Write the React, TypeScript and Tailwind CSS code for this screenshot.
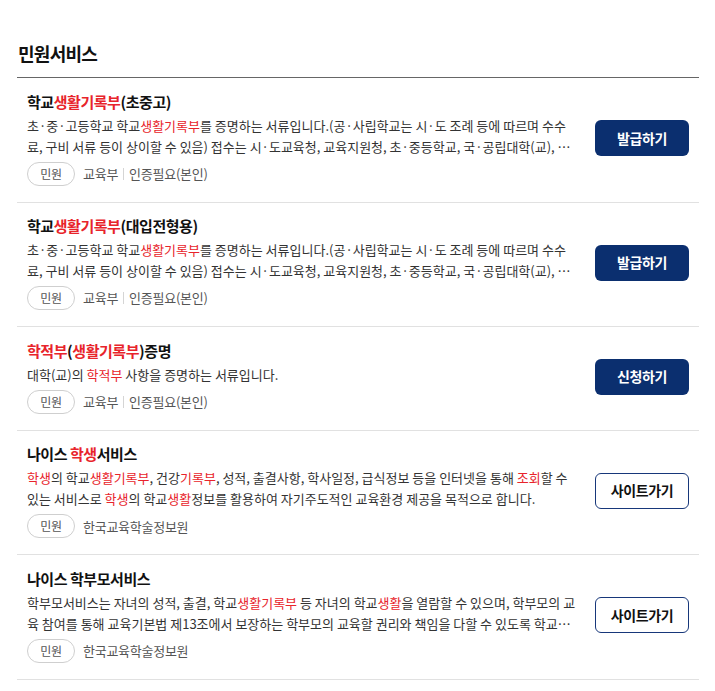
import React from 'react';

type Part = string | { red: string };

interface ServiceItem {
  title: Part[];
  desc: Part[];
  agencies: string[];
  action: string;
  outline?: boolean;
}

const items: ServiceItem[] = [
  {
    title: ['학교', { red: '생활기록부' }, '(초중고)'],
    desc: [
      '초·중·고등학교 학교',
      { red: '생활기록부' },
      '를 증명하는 서류입니다.(공·사립학교는 시·도 조례 등에 따르며 수수료, 구비 서류 등이 상이할 수 있음) 접수는 시·도교육청, 교육지원청, 초·중등학교, 국·공립대학(교), 지방자치단체 등에서 가능합니다.',
    ],
    agencies: ['교육부', '인증필요(본인)'],
    action: '발급하기',
  },
  {
    title: ['학교', { red: '생활기록부' }, '(대입전형용)'],
    desc: [
      '초·중·고등학교 학교',
      { red: '생활기록부' },
      '를 증명하는 서류입니다.(공·사립학교는 시·도 조례 등에 따르며 수수료, 구비 서류 등이 상이할 수 있음) 접수는 시·도교육청, 교육지원청, 초·중등학교, 국·공립대학(교), 지방자치단체 등에서 가능합니다.',
    ],
    agencies: ['교육부', '인증필요(본인)'],
    action: '발급하기',
  },
  {
    title: [{ red: '학적부' }, '(', { red: '생활기록부' }, ')증명'],
    desc: ['대학(교)의 ', { red: '학적부' }, ' 사항을 증명하는 서류입니다.'],
    agencies: ['교육부', '인증필요(본인)'],
    action: '신청하기',
  },
  {
    title: ['나이스 ', { red: '학생' }, '서비스'],
    desc: [
      { red: '학생' },
      '의 학교',
      { red: '생활기록부' },
      ', 건강',
      { red: '기록부' },
      ', 성적, 출결사항, 학사일정, 급식정보 등을 인터넷을 통해 ',
      { red: '조회' },
      '할 수 있는 서비스로 ',
      { red: '학생' },
      '의 학교',
      { red: '생활' },
      '정보를 활용하여 자기주도적인 교육환경 제공을 목적으로 합니다.',
    ],
    agencies: ['한국교육학술정보원'],
    action: '사이트가기',
    outline: true,
  },
  {
    title: ['나이스 학부모서비스'],
    desc: [
      '학부모서비스는 자녀의 성적, 출결, 학교',
      { red: '생활기록부' },
      ' 등 자녀의 학교',
      { red: '생활' },
      '을 열람할 수 있으며, 학부모의 교육 참여를 통해 교육기본법 제13조에서 보장하는 학부모의 교육할 권리와 책임을 다할 수 있도록 학교교육에 대한 정보를 제공합니다.',
    ],
    agencies: ['한국교육학술정보원'],
    action: '사이트가기',
    outline: true,
  },
];

const renderParts = (parts: Part[]) =>
  parts.map((p, i) =>
    typeof p === 'string' ? (
      <React.Fragment key={i}>{p}</React.Fragment>
    ) : (
      <span key={i} className="text-[#e8242b]">
        {p.red}
      </span>
    )
  );

const Row: React.FC<{ item: ServiceItem }> = ({ item }) => (
  <li className="flex items-center border-b border-[#e1e1e1] pl-2.5 pr-2.5 pt-[12.6px] pb-4">
    <div className="min-w-0 flex-1">
      <h3 className="text-[15px] font-bold leading-[22px] tracking-[-0.03em] text-[#111]">
        {renderParts(item.title)}
      </h3>
      <p className="mt-[2px] line-clamp-2 text-[13px] leading-[21px] text-[#333]">
        {renderParts(item.desc)}
      </p>
      <div className="mt-[5px] flex items-center text-[13px] tracking-[-0.02em] text-[#555]">
        <span className="flex h-6 w-12 items-center justify-center rounded-full border border-[#cfcfcf] text-[12px] text-[#555]">
          민원
        </span>
        {item.agencies.map((a, i) => (
          <React.Fragment key={a}>
            {i > 0 && <span className="mx-[5px] h-3 w-px bg-[#d5d5d5]" />}
            <span className={i === 0 ? 'ml-2' : ''}>{a}</span>
          </React.Fragment>
        ))}
      </div>
    </div>
    <button
      className={
        item.outline
          ? 'ml-[19px] h-9 w-[94px] shrink-0 rounded-md border border-[#17377a] bg-white text-[14px] font-bold tracking-[-0.03em] text-[#111]'
          : 'ml-[19px] h-9 w-[94px] shrink-0 rounded-md bg-[#0b2f6f] text-[14px] font-bold tracking-[-0.03em] text-white'
      }
    >
      {item.action}
    </button>
  </li>
);

export default function App() {
  return (
    <div className="min-h-screen bg-white pl-[17px] pr-4 pt-[39px] font-['Noto_Sans_CJK_KR','Noto_Sans',sans-serif]">
      <h2 className="pl-px text-[18px] font-bold leading-[28px] tracking-[-0.04em] text-[#111]">민원서비스</h2>
      <ul className="mt-[10px] border-t border-[#666]">
        {items.map((item, i) => (
          <Row key={i} item={item} />
        ))}
      </ul>
    </div>
  );
}
